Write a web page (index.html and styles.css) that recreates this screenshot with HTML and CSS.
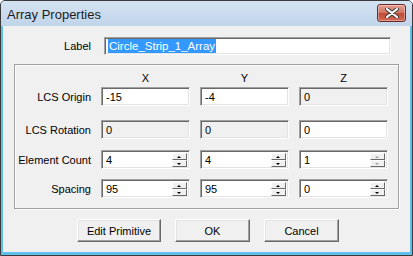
FILE: index.html
```html
<!DOCTYPE html>
<html lang="en">
  <head>
    <meta charset="UTF-8" />
    <title>Array Properties</title>
    <link rel="stylesheet" href="styles.css">
  </head>
  <body>
    <div class="window">
      <div class="titlebar">
        <span class="title">Array Properties</span>
        <button class="close" type="button">
          <svg viewBox="0 0 14 10" width="14" height="10">
            <path d="M2 1 L12 9 M12 1 L2 9" stroke="#3a3a3a" stroke-width="4" stroke-linecap="round"/>
            <path d="M2 1 L12 9 M12 1 L2 9" stroke="#ffffff" stroke-width="2.2" stroke-linecap="round"/>
          </svg>
        </button>
      </div>
      <div class="content">
        <div class="label-row">
          <div class="caption">Label</div>
          <div class="field wide"><span class="selected">Circle_Strip_1_Array</span></div>
        </div>

        <div class="group">
          <div class="row head">
            <div class="caption"></div>
            <div class="col">X</div>
            <div class="col">Y</div>
            <div class="col">Z</div>
          </div>
          <div class="row origin">
            <div class="caption">LCS Origin</div>
            <div class="field">-15</div>
            <div class="field">-4</div>
            <div class="field disabled">0</div>
          </div>
          <div class="row rotation">
            <div class="caption">LCS Rotation</div>
            <div class="field disabled">0</div>
            <div class="field disabled">0</div>
            <div class="field">0</div>
          </div>
          <div class="row count">
            <div class="caption">Element Count</div>
            <div class="field spin-field"><span class="value">4</span><div class="spin"><span class="up"></span><span class="down"></span></div></div>
            <div class="field spin-field"><span class="value">4</span><div class="spin"><span class="up"></span><span class="down"></span></div></div>
            <div class="field spin-field"><span class="value">1</span><div class="spin off"><span class="up"></span><span class="down"></span></div></div>
          </div>
          <div class="row spacing">
            <div class="caption">Spacing</div>
            <div class="field spin-field"><span class="value">95</span><div class="spin"><span class="up"></span><span class="down"></span></div></div>
            <div class="field spin-field"><span class="value">95</span><div class="spin"><span class="up"></span><span class="down"></span></div></div>
            <div class="field spin-field"><span class="value">0</span><div class="spin"><span class="up"></span><span class="down"></span></div></div>
          </div>
        </div>

        <div class="buttons">
          <button class="btn edit" type="button">Edit Primitive</button>
          <button class="btn" type="button">OK</button>
          <button class="btn" type="button">Cancel</button>
        </div>
      </div>
    </div>
  </body>
</html>
```

FILE: styles.css
```css
body {
  margin: 0;
  font-family: "Liberation Sans", Arial, sans-serif;
  font-size: 11px;
  color: #000000;
  background-color: #ffffff;
}

.window {
  width: 413px;
  height: 256px;
  box-sizing: border-box;
  border: 1px solid #3a3a3a;
  border-radius: 5px 5px 0 0;
  background-color: #5fbfea;
  display: flex;
  flex-direction: column;
  overflow: hidden;
}

.titlebar {
  height: 25px;
  display: flex;
  align-items: center;
  justify-content: space-between;
  padding: 0 6px 0 6px;
  background: linear-gradient(#d5e3f2, #c0d4ea);
}

.title {
  font-size: 13px;
  color: #1c1c1c;
  margin-top: 1px;
}

.close {
  width: 29px;
  height: 18px;
  margin-top: -2px;
  padding: 0;
  border: 1px solid #6b2a22;
  border-radius: 3px;
  background: linear-gradient(#e2a093, #d07261 50%, #c04a36 51%, #cf6a56);
  display: flex;
  align-items: center;
  justify-content: center;
  box-shadow: inset 0 0 0 1px rgba(255, 255, 255, 0.35);
}

.content {
  flex: 1;
  margin: 0 2px 3px 2px;
  background-color: #f0f0f0;
  display: flex;
  flex-direction: column;
  align-items: flex-start;
  padding-top: 11px;
}

.caption {
  width: 76px;
  text-align: right;
  flex-shrink: 0;
}

.label-row {
  display: flex;
  align-items: center;
  gap: 13px;
}

.label-row .caption {
  width: 88px;
}

.field {
  box-sizing: border-box;
  width: 89px;
  height: 19px;
  background-color: #ffffff;
  border-style: solid;
  border-width: 1px;
  border-color: #a0a0a0 #ffffff #ffffff #a0a0a0;
  box-shadow: inset 1px 1px 0 #696969, inset -1px -1px 0 #e3e3e3;
  padding: 3px 4px 0 4px;
  line-height: 13px;
  white-space: nowrap;
}

.field.disabled {
  background-color: #f0f0f0;
}

.field.wide {
  width: 287px;
  height: 18px;
  padding: 1px 2px 0 3px;
  font-size: 11.5px;
}

.selected {
  display: inline-block;
  background-color: #3399ff;
  color: #ffffff;
  line-height: 14px;
  padding: 0 1px;
}

.group {
  margin: 9px 0 0 11px;
  width: 385px;
  box-sizing: border-box;
  border: 1px solid #a0a0a0;
  box-shadow: inset 1px 1px 0 #ffffff, 1px 1px 0 #ffffff;
  padding: 6px 10px 10px 0;
}

.row {
  display: flex;
  align-items: center;
  gap: 10px;
}

.row.head {
  height: 14px;
}

.row.head .col {
  width: 89px;
  text-align: center;
}

.row.origin {
  margin-top: 2px;
}

.row.rotation {
  margin-top: 14px;
}

.row.count {
  margin-top: 11px;
}

.row.spacing {
  margin-top: 10px;
}

.spin-field {
  display: flex;
  align-items: stretch;
  padding: 2px 2px 1px 4px;
}

.spin-field .value {
  flex: 1;
  padding-top: 1px;
}

.spin {
  width: 15px;
  display: flex;
  flex-direction: column;
}

.spin span {
  flex: 1;
  background-color: #f0f0f0;
  border-style: solid;
  border-width: 1px;
  border-color: #ffffff #696969 #696969 #ffffff;
  position: relative;
}

.spin span::after {
  content: "";
  position: absolute;
  left: 4px;
  top: 2px;
  border-left: 2px solid transparent;
  border-right: 2px solid transparent;
}

.spin .up::after {
  border-bottom: 2px solid #000000;
}

.spin .down::after {
  border-top: 2px solid #000000;
}

.spin.off .up::after {
  border-bottom-color: #a0a0a0;
}

.spin.off .down::after {
  border-top-color: #a0a0a0;
}

.buttons {
  align-self: stretch;
  display: flex;
  justify-content: center;
  gap: 14px;
  margin-top: 10px;
  padding-left: 3px;
}

.btn {
  width: 75px;
  height: 23px;
  font-family: "Liberation Sans", Arial, sans-serif;
  font-size: 11px;
  color: #000000;
  background-color: #f0f0f0;
  border-style: solid;
  border-width: 1px;
  border-color: #ffffff #696969 #696969 #ffffff;
  box-shadow: inset -1px -1px 0 #a0a0a0, inset 1px 1px 0 #e3e3e3;
  padding: 0;
}

.btn.edit {
  width: 84px;
}
```
